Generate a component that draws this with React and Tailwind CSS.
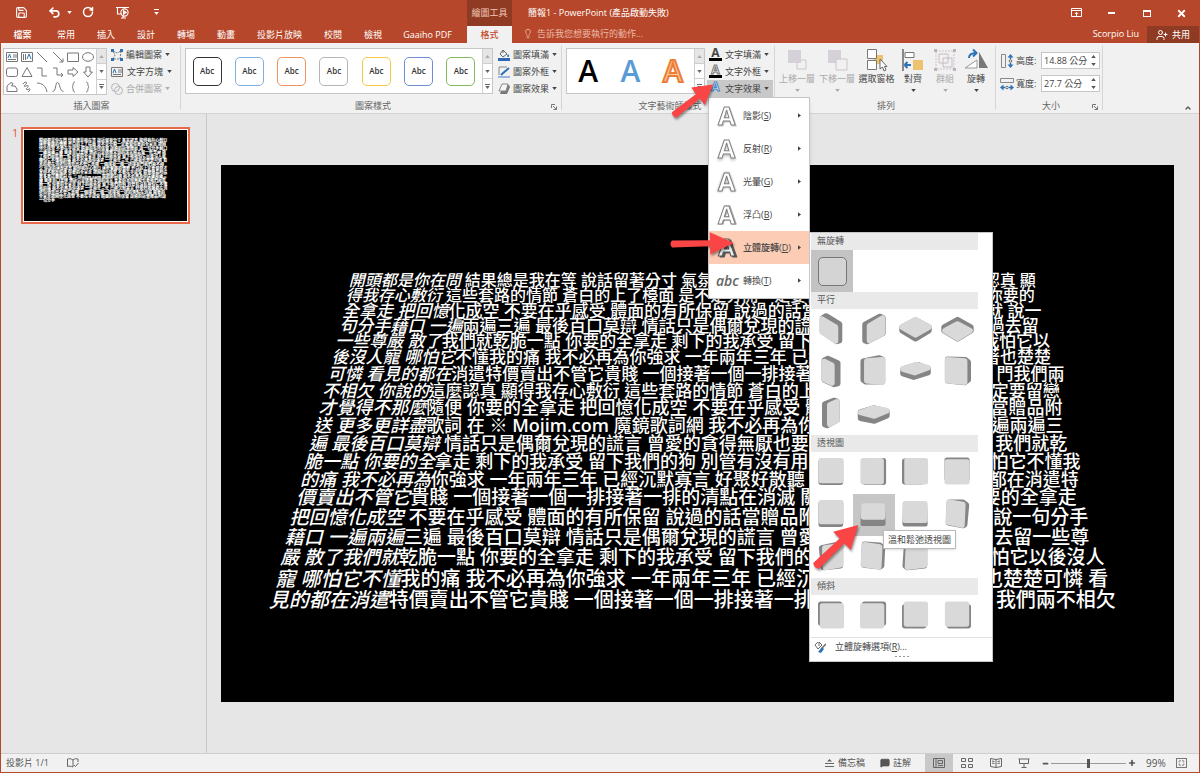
import clsx from "clsx";
import {
  ChevronUp,
  Lightbulb,
  Maximize,
  MessageSquare,
  Minus,
  Plus,
  RotateCw,
  Save,
  Undo2,
  UserPlus,
  X,
} from "lucide-react";

const TABS = ["常用", "插入", "設計", "轉場", "動畫", "投影片放映", "校閱", "檢視"];

// from / to are the line's edges in percent of the slide width
const LINES = [
  { size: "text-[16px] leading-[15px]", from: 13.4, to: 14.5, lean: "開頭都是你在問", text: " 結果總是我在等 說話留著分寸 氣氛", end: "認真 顯" },
  { size: "text-[16px] leading-[15px]", from: 13.1, to: 14.6, lean: "得我存心敷衍", text: " 這些套路的情節 蒼白的上了檯面 是不是分開一定要留", end: "你要的" },
  { size: "text-[17px] leading-[15px]", from: 12.7, to: 13.9, lean: "全拿走 把回憶", text: "化成空 不要在乎感受 體面的有所保留 說過的話當贈", end: "就 說一" },
  { size: "text-[17px] leading-[15px]", from: 12.4, to: 14.2, lean: "句分手藉口 一遍", text: "兩遍三遍 最後百口莫辯 情話只是偶爾兌現的謊言", end: "過去留" },
  { size: "text-[17px] leading-[16px]", from: 12, to: 13, lean: "一些尊嚴 散了", text: "我們就乾脆一點 你要的全拿走 剩下的我承受 留下我", end: "我怕它以" },
  { size: "text-[17px] leading-[16px]", from: 11.6, to: 12.9, lean: "後沒人寵 哪怕它", text: "不懂我的痛 我不必再為你強求 一年兩年三年 已經", end: "著也楚楚" },
  { size: "text-[17px] leading-[17px]", from: 11.2, to: 11.5, lean: "可憐 看見的都在", text: "消遣特價賣出不管它貴賤 一個接著一個一排接著", end: "門我們兩" },
  { size: "text-[17px] leading-[17px]", from: 10.6, to: 12, lean: "不相欠 你說的", text: "這麼認真 顯得我存心敷衍 這些套路的情節 蒼白的上", end: "定要留戀" },
  { size: "text-[18px] leading-[17px]", from: 10.2, to: 11.7, lean: "才覺得不那麼", text: "隨便 你要的全拿走 把回憶化成空 不要在乎感受 體", end: "當贈品附" },
  { size: "text-[18px] leading-[18px]", from: 9.7, to: 11.6, lean: "送 更多更詳盡", text: "歌詞 在 ※ ", brand: "Mojim.com", after: " 魔鏡歌詞網 我不必再為你送", end: "遍兩遍三" },
  { size: "text-[18px] leading-[18px]", from: 9.2, to: 11.2, lean: "遍 最後百口莫辯", text: " 情話只是偶爾兌現的謊言 曾愛的貪得無厭也要", end: "我們就乾" },
  { size: "text-[18px] leading-[18px]", from: 8.7, to: 9.8, lean: "脆一點 你要的全", text: "拿走 剩下的我承受 留下我們的狗 別管有沒有用", end: "怕它不懂我" },
  { size: "text-[18px] leading-[18px]", from: 8.3, to: 10, lean: "的痛 我不必再為", text: "你強求 一年兩年三年 已經沉默寡言 好聚好散聽", end: "都在消遣特" },
  { size: "text-[19px] leading-[19px]", from: 7.9, to: 10.2, lean: "價賣出不管它", text: "貴賤 一個接著一個一排接著一排的清點在消滅 關", end: "要的全拿走" },
  { size: "text-[19px] leading-[20px]", from: 7.2, to: 9, lean: "把回憶化成空", text: " 不要在乎感受 體面的有所保留 說過的話當贈品附", end: "說一句分手" },
  { size: "text-[19px] leading-[20px]", from: 6.7, to: 8.9, lean: "藉口 一遍兩遍", text: "三遍 最後百口莫辯 情話只是偶爾兌現的謊言 曾愛", end: "去留一些尊" },
  { size: "text-[19px] leading-[21px]", from: 6.2, to: 7.3, lean: "嚴 散了我們就", text: "乾脆一點 你要的全拿走 剩下的我承受 留下我們的", end: "怕它以後沒人" },
  { size: "text-[20px] leading-[21px]", from: 5.7, to: 6.9, lean: "寵 哪怕它不懂", text: "我的痛 我不必再為你強求 一年兩年三年 已經沉默", end: "也楚楚可憐 看" },
  { size: "text-[20px] leading-[22px]", from: 5, to: 6.1, lean: "見的都在消遣", text: "特價賣出不管它貴賤 一個接著一個一排接著一排", end: "我們兩不相欠" },
];

const STYLES = [
  "border-[#333333]",
  "border-[#7fb0e0]",
  "border-[#f0935c]",
  "border-[#b5b5b5]",
  "border-[#f7c843]",
  "border-[#6f8fd0]",
  "border-[#84bb5f]",
];

function Caret({ className }) {
  return (
    <svg viewBox="0 0 6 4" className={clsx("w-[5px] h-[3px] shrink-0", className)}>
      <path d="M0 0h6L3 4z" fill="currentColor" />
    </svg>
  );
}

/* ---------- Title bar ---------- */

function TitleBar() {
  return (
    <header className="flex bg-[#b7472a] text-white">
      <div className="w-[466px] shrink-0">
        <div className="h-[26px] flex items-center pl-[14px] pb-[2px]">
          <button aria-label="儲存" className="w-[14px]">
            <Save className="w-[13px] h-[13px]" />
          </button>
          <button aria-label="復原" className="ml-[19px] flex items-center gap-[6px]">
            <Undo2 className="w-[13px] h-[13px]" strokeWidth={3} />
            <Caret />
          </button>
          <button aria-label="取消復原" className="ml-[10px]">
            <RotateCw className="w-3 h-3" strokeWidth={3} />
          </button>
          <button aria-label="從首張投影片" className="ml-[22px]">
            <svg viewBox="0 0 14 13" className="w-[14px] h-[13px]" fill="none" stroke="currentColor" strokeWidth="1.1">
              <path d="M0 1.500h13M1.500 1.500v6.500h4M5 12h5M7 9.500V12" />
              <circle cx="8.500" cy="6.500" r="3.600" />
              <path d="M7.500 4.800v3.400l2.700-1.700z" fill="currentColor" />
            </svg>
          </button>
          <button aria-label="自訂快速存取工具列" className="ml-6 flex flex-col items-center gap-[2px]">
            <span className="w-[5px] h-px bg-white" />
            <Caret />
          </button>
        </div>
        <nav className="h-[17px] flex text-[9px] leading-[15px]">
          <button className="w-[43px] mr-[2px] text-center font-medium">檔案</button>
          {TABS.map((t) => (
            <button key={t} className="px-[11px] whitespace-nowrap">
              {t}
            </button>
          ))}
          <button className="pl-[10px] text-[9px] whitespace-nowrap">Gaaiho PDF</button>
        </nav>
      </div>

      <div className="w-[45px] shrink-0 text-center text-[9px] whitespace-nowrap">
        <div className="h-[26px] leading-[26px] bg-[#8f3b24] text-[#f0c4b4]">繪圖工具</div>
        <button className="block w-full h-[17px] leading-[15px] bg-[#f1f1f1] text-[#c04a2b] font-medium">
          格式
        </button>
      </div>

      <div className="flex-1 min-w-0">
        <div className="h-[26px] flex items-center justify-between pl-4 text-[9px]">
          <h1 className="whitespace-nowrap">簡報1 - PowerPoint (產品啟動失敗)</h1>
          <div className="flex">
            <button aria-label="功能區顯示選項" className="w-[35px] flex justify-center">
              <svg viewBox="0 0 11 9" className="w-[11px] h-[9px]" fill="none" stroke="currentColor">
                <path d="M.5.5h10v8H.5zM.5 2.500h10M5.500 8V4.500M3.800 6l1.700-1.700L7.200 6" />
              </svg>
            </button>
            <button aria-label="最小化" className="w-[35px] flex justify-center items-center">
              <span className="w-[7px] h-[2px] bg-white" />
            </button>
            <button aria-label="最大化" className="w-[35px] flex justify-center items-center">
              <span className="w-2 h-[7px] border border-t-2 border-white" />
            </button>
            <button aria-label="關閉" className="w-[35px] flex justify-center">
              <X className="w-[11px] h-[11px]" strokeWidth={4} />
            </button>
          </div>
        </div>
        <div className="h-[17px] flex text-[9px] leading-[15px]">
          <button className="flex pl-[11px] gap-1 text-[#ecb9a8] whitespace-nowrap">
            <Lightbulb className="w-[10px] h-[11px] mt-[2px]" />
            告訴我您想要執行的動作...
          </button>
          <span className="ml-auto mr-2">Scorpio Liu</span>
          <button className="w-[52px] flex items-center justify-center gap-1 bg-[#8f3b24]">
            <UserPlus className="w-3 h-3" strokeWidth={2} />
            共用
          </button>
        </div>
      </div>
    </header>
  );
}

/* ---------- Ribbon ---------- */

function Group({ label, launcher, className, children }) {
  return (
    <section className={clsx("relative flex flex-col border-r border-[#d5d5d5] my-[3px] shrink-0", className)}>
      <div className="flex-1 flex">{children}</div>
      <div className="h-[9px] text-center text-[9px] leading-[9px] text-[#666]">{label}</div>
      {launcher && (
        <svg viewBox="0 0 6 6" className="absolute right-1 bottom-0 w-[6px] h-[6px]" fill="none" stroke="#777">
          <path d="M.5 4V.5H4M2 2l3.500 3.500M5.500 2.500v3h-3" />
        </svg>
      )}
    </section>
  );
}

function Scroller() {
  return (
    <div className="w-[10px] flex flex-col border-l border-[#cfcfcf] text-[#666] divide-y divide-[#cfcfcf]">
      <button aria-label="上一列" className="flex-1 flex items-center justify-center bg-[#e6e6e6] text-[#aaa]">
        <Caret className="rotate-180" />
      </button>
      <button aria-label="下一列" className="flex-1 flex items-center justify-center">
        <Caret />
      </button>
      <button aria-label="其他" className="flex-1 flex flex-col items-center justify-center gap-px">
        <span className="w-[5px] h-px bg-[#666]" />
        <Caret />
      </button>
    </div>
  );
}

function SmallButton({ icon, label, disabled, active, gap = "gap-[3px]" }) {
  return (
    <button
      disabled={disabled}
      className={clsx(
        "h-[17px] flex items-center pl-[2px] pr-1 text-[9px] whitespace-nowrap",
        gap,
        disabled ? "text-[#aaa]" : "text-[#444]",
        active && "bg-[#c8c8c8]"
      )}
    >
      {icon}
      <span>{label}</span>
      <Caret />
    </button>
  );
}

const SHAPES = [
  <g key="0"><path d="M.5 1.500h11v9H.5z" /><path d="M7 4h4M7 6h4M2 8.500h8" /><path d="M2 7l1.500-4L5 7" stroke="#2b72b8" /></g>,
  <g key="1"><path d="M.5 1.500h11v9H.5zM2.500 3v6M4.500 3v6" /><path d="M6 8l2-5 2 5" stroke="#2b72b8" /></g>,
  <path key="2" d="M1 1l10 10" />,
  <path key="3" d="M1 1l10 10M11 7.500V11H7.500" />,
  <path key="4" d="M.5 2h11v8.500H.5z" />,
  <ellipse key="5" cx="6" cy="6" rx="5.500" ry="4.300" />,
  <rect key="6" x=".5" y="2" width="11" height="8.500" rx="2" />,
  <path key="7" d="M6 1.500l5 9H1z" />,
  <path key="8" d="M1 2h5v8h5" />,
  <path key="9" d="M1 2h4v7h6M9 7l2 2-2 2" />,
  <path key="10" d="M1 4h5V1.500L11 6l-5 4.500V8H1z" />,
  <path key="11" d="M4 1v5H1.500L6 11l4.500-5H8V1z" />,
  <path key="12" d="M1 10.500V5l4-3.500 2 1L5.500 5H9l2 3v2.500z" />,
  <path key="13" d="M2 3c2-3 5-2 3 0s-3 3 0 2 3 0 1 2 1 2 2 1 2 1-1 3" />,
  <path key="14" d="M1 2c5 0 9 3 10 9" />,
  <path key="15" d="M.5 10.500c4 0 2.500-9 5-9s2 9 6 9" />,
  <path key="16" d="M8 1C5 1 7 5 5 6c2 1 0 5 3 5" />,
  <path key="17" d="M4 1c3 0 1 4 3 5-2 1 0 5-3 5" />,
];

function TextBoxIcon() {
  return (
    <svg viewBox="0 0 12 12" className="w-3 h-3" fill="none" stroke="#777">
      {SHAPES[0]}
    </svg>
  );
}

function LetterIcon({ className, bar }) {
  return (
    <span
      className={clsx(
        "w-[13px] h-[13px] text-[12px] leading-[10px] text-center font-bold",
        bar && "border-b-3 border-black",
        className
      )}
    >
      A
    </span>
  );
}

function BigButton({ label, disabled, caret = true, className, children }) {
  return (
    <button
      disabled={disabled}
      className={clsx(
        "flex flex-col items-center text-[9px] leading-[14px] whitespace-nowrap",
        disabled ? "text-[#aaa]" : "text-[#444]",
        className
      )}
    >
      <svg viewBox="0 0 24 24" className="w-6 h-6 mt-[2px]" fill="none">
        {children}
      </svg>
      <span>{label}</span>
      {caret && <Caret className="mt-[3px]" />}
    </button>
  );
}

function SizeField({ id, label, value, vertical }) {
  return (
    <div className="flex items-center">
      <svg
        viewBox="0 0 14 14"
        className={clsx("w-[14px] h-[14px] mr-[2px] shrink-0", vertical && "rotate-90 -scale-y-100")}
        fill="none"
      >
        <path d="M.5 1.500h13v4H.5z" stroke="#888" />
        <path d="M0 10.500l3.500-3v6zM14 10.500l-3.500-3v6z" fill="#2b72b8" />
        <path d="M3 10.500h2M9 10.500h2" stroke="#2b72b8" strokeWidth="1.500" />
        <circle cx="7" cy="10.500" r="1.300" stroke="#666" />
      </svg>
      <label htmlFor={id} className="w-[25px] shrink-0 text-[9px] text-[#444] whitespace-nowrap">
        {label}
      </label>
      <div className="w-[59px] h-[17px] flex items-center bg-white border border-[#c6c6c6]">
        <input
          id={id}
          defaultValue={value}
          className="w-[49px] min-w-0 pl-[2px] text-[9px] text-[#444] outline-none"
        />
        <span className="flex flex-col gap-[5px] text-[#555]">
          <Caret className="rotate-180" />
          <Caret />
        </span>
      </div>
    </div>
  );
}

function Ribbon() {
  return (
    <div className="relative z-10 h-[71px] flex pl-[2px] bg-[#f1f1f1] border-b border-[#d2d2d2]">
      <Group label="插入圖案" className="w-[178px]">
        <div className="w-[104px] h-[47px] mt-[2px] flex bg-white border border-[#c6c6c6]">
          <div className="flex-1 grid grid-cols-6 place-items-center">
            {SHAPES.map((s, i) => (
              <svg key={i} viewBox="0 0 12 12" className="w-3 h-3" fill="none" stroke="#777">
                {s}
              </svg>
            ))}
          </div>
          <Scroller />
        </div>
        <div className="ml-[2px]">
          <SmallButton
            label="編輯圖案"
            icon={
              <svg viewBox="0 0 12 12" className="w-3 h-3" fill="none">
                <path d="M2 2l4 2 4-2-1 8-7 0 2-4z" stroke="#777" strokeDasharray="2 1" />
                <path d="M0 0h3v3H0zM9 0h3v3H9zM0 9h3v3H0zM9 9h3v3H9z" fill="#2b72b8" />
              </svg>
            }
          />
          <SmallButton label="文字方塊" gap="gap-1" icon={<TextBoxIcon />} />
          <SmallButton
            label="合併圖案"
            disabled
            icon={
              <svg viewBox="0 0 12 12" className="w-3 h-3" fill="none" stroke="#b5b5b5">
                <circle cx="4.500" cy="4.500" r="4" />
                <circle cx="7.500" cy="7.500" r="4" />
              </svg>
            }
          />
        </div>
      </Group>

      <Group label="圖案樣式" launcher className="w-[381px] pl-1">
        <div className="w-[308px] h-[46px] mt-[2px] flex bg-white border border-[#c6c6c6]">
          <div className="flex-1 flex items-center justify-around">
            {STYLES.map((s) => (
              <button
                key={s}
                className={clsx(
                  "w-[29px] h-[29px] rounded-[5px] border text-[8px] font-semibold text-[#333]",
                  s
                )}
              >
                Abc
              </button>
            ))}
          </div>
          <Scroller />
        </div>
        <div className="ml-[3px]">
          <SmallButton
            label="圖案填滿"
            icon={
              <svg viewBox="0 0 12 12" className="w-3 h-3" fill="none">
                <path d="M5 1l4 4-4 3-3-3zM5 1v3" stroke="#666" />
                <path d="M10 5c2 2 1 3 0 3s-1-2 0-3z" fill="#2b72b8" />
                <path d="M0 9h12v3H0z" fill="#2f66b5" />
              </svg>
            }
          />
          <SmallButton
            label="圖案外框"
            icon={
              <svg viewBox="0 0 12 12" className="w-3 h-3" fill="none">
                <path d="M9 1H1v8" stroke="#888" />
                <path d="M11 2L4 8l-1 1" stroke="#2b72b8" strokeWidth="2" />
                <path d="M0 10h12v2H0z" fill="#9bb9dc" />
              </svg>
            }
          />
          <SmallButton
            label="圖案效果"
            icon={
              <svg viewBox="0 0 12 12" className="w-3 h-3">
                <path d="M5 2h6l1 2-3 7H2z" fill="#777" />
                <path d="M4 1h6L8 8H1z" fill="#f5f5f5" stroke="#888" />
              </svg>
            }
          />
        </div>
      </Group>

      <Group label="文字藝術師樣式" className="w-[213px] pl-1">
        <div className="w-[139px] h-[46px] mt-[2px] flex bg-white border border-[#c6c6c6]">
          <div className="flex-1 flex items-center justify-around text-[30px] leading-[44px]">
            <button className="font-semibold text-black">A</button>
            <button className="font-semibold text-[#5b9bd5]">A</button>
            <button className="font-semibold text-[#f8cbad] [-webkit-text-stroke:2px_#ed7d31]">A</button>
          </div>
          <Scroller />
        </div>
        <div className="relative ml-[2px]">
          <SmallButton label="文字填滿" icon={<LetterIcon bar className="text-[#444]" />} />
          <SmallButton
            label="文字外框"
            icon={<LetterIcon bar className="text-white [-webkit-text-stroke:1px_#777]" />}
          />
          <SmallButton
            active
            label="文字效果"
            icon={<LetterIcon className="text-white [-webkit-text-stroke:1px_#4a86c8]" />}
          />
          <EffectsMenu />
        </div>
      </Group>

      <Group label="排列" className="w-[221px] pl-[2px]">
        <BigButton label="上移一層" disabled className="w-10">
          <path d="M12 12h9v9h-9z" stroke="#ccc4cc" />
          <path d="M3 2h13v13H3z" fill="#d6d0d8" />
        </BigButton>
        <BigButton label="下移一層" disabled className="w-10">
          <path d="M3 2h13v13H3z" fill="#d6d0d8" />
          <path d="M11 11h11v11H11z" fill="#f1f1f1" stroke="#ccc4cc" />
        </BigButton>
        <BigButton label="選取窗格" caret={false} className="w-[39px]">
          <path d="M9 7h9v9H9z" fill="#eec36f" />
          <path d="M2.500 1.500h9v9h-9zM2.500 12.500h9v9h-9z" fill="#fff" stroke="#777" />
          <path d="M15 11v10l2.500-2 1.500 4 2-1-1.500-3.500H22z" fill="#fff" stroke="#666" />
        </BigButton>
        <BigButton label="對齊" className="w-[34px]">
          <path d="M2 1v22" stroke="#666" strokeWidth="1.500" />
          <path d="M4 4.500h9v5H4z" stroke="#777" fill="#fff" />
          <path d="M12 12h10v10H12z" fill="#eec36f" />
          <path d="M3.500 17l3-3M3.500 17l3 3M3.500 17H10" stroke="#2b72b8" strokeWidth="2" />
        </BigButton>
        <BigButton label="群組" disabled className="w-[30px]">
          <path d="M3 3h18v18H3z" stroke="#ccc4cc" strokeDasharray="2 1" />
          <path d="M6 6h9v9H6zM10 10h9v9h-9z" stroke="#c4bcc4" />
          <path d="M1 1h3v3H1zM20 1h3v3h-3zM1 20h3v3H1zM20 20h3v3h-3z" fill="#bbb3bb" />
        </BigButton>
        <BigButton label="旋轉" className="w-8">
          <path d="M15 4v16h9z" fill="#777" />
          <path d="M13 12v8H1z" fill="#fff" stroke="#999" />
          <path d="M5 10c0-4 3-5 7-5M9 1.500L12.500 5 9 8.500" stroke="#2b72b8" strokeWidth="2" />
        </BigButton>
      </Group>

      <Group label="大小" launcher className="w-[107px] pl-1">
        <div className="mt-[6px] flex flex-col gap-[6px]">
          <SizeField id="shape-height" label="高度:" value="14.88 公分" vertical />
          <SizeField id="shape-width" label="寬度:" value="27.7 公分" />
        </div>
      </Group>

      <button aria-label="摺疊功能區" className="ml-auto mr-[7px] mb-[1px] self-end">
        <ChevronUp className="w-2 h-2 text-[#555]" strokeWidth={4} />
      </button>
    </div>
  );
}

/* ---------- Text effects menu ---------- */

const EFFECTS = [
  { label: "陰影", hot: "S", icon: "drop-shadow-[1px_1px_0_#ccc]" },
  { label: "反射", hot: "R", icon: "drop-shadow-[0_2px_1px_#ccc]" },
  { label: "光暈", hot: "G", icon: "drop-shadow-[0_0_1px_#aaa]" },
  { label: "浮凸", hot: "B", icon: "drop-shadow-[1px_0_0_#aaa]" },
];

function MenuItem({ label, hot, icon, active, children }) {
  return (
    <li className={clsx("relative", active && "bg-[#fcccb5]")}>
      <button className="w-full h-[33px] flex items-center px-[7px]">
        <span className="w-[21px] mr-[6px] text-center">{icon}</span>
        <span className={clsx("whitespace-nowrap", active && "font-medium")}>
          {label}(<u>{hot}</u>)
        </span>
        <Caret className="ml-auto -rotate-90" />
      </button>
      {children}
    </li>
  );
}

function EffectsMenu() {
  return (
    <ul className="absolute left-px top-[51px] w-[102px] py-px bg-white border border-[#c6c6c6] shadow-md text-[9px] text-[#444]">
      {EFFECTS.map((e) => (
        <MenuItem
          key={e.hot}
          label={e.label}
          hot={e.hot}
          icon={
            <span
              className={clsx(
                "inline-block text-[25px] leading-6 font-bold text-white [-webkit-text-stroke:1px_#808080]",
                e.icon
              )}
            >
              A
            </span>
          }
        />
      ))}
      <MenuItem
        label="立體旋轉"
        hot="D"
        active
        icon={
          <span className="inline-block text-[24px] leading-6 font-bold text-[#eee] [-webkit-text-stroke:1px_#555] drop-shadow-[2px_1px_0_#555]">
            A
          </span>
        }
      >
        <RotationMenu />
      </MenuItem>
      <MenuItem
        label="轉換"
        hot="T"
        icon={<span className="text-[14px] leading-5 italic font-semibold text-[#666]">abc</span>}
      />
    </ul>
  );
}

// back is the extruded body, face the lit front side
const PARALLEL = [
  { back: "11,9 15,6.500 30,15.500 30,34 27,35 11,24", face: "10.500,10 25.500,19 25.500,34.500 10.500,24.500" },
  { back: "11.500,16 28,7 31.500,8.500 31.500,26 14,35 11.500,34", face: "16.500,17.500 31,9 31,26 16.500,34" },
  { back: "6,19 21,11 36,19 36,23 21,32 6,23", face: "6,19 21,10.500 36,19 21,27.500" },
  { back: "6,19 21,10.500 36,19 36,23 21,32 6,23", face: "7,23 21,15.500 35,23 21,31.500" },
  { back: "13,9 17,7 28,12 28,35 24,36 13,31", face: "13,10.500 21.500,14.500 21.500,34.500 13,30.500" },
  { back: "9.500,10 27,6.500 31,8 31,33 12,33 9.500,31", face: "13.500,10 31,8.500 31,33.500 13.500,32" },
  { back: "7,19 23,14 35,18 35,23 19,28 7,24", face: "7,19 22,14 35,17.500 20,23" },
  { back: "10,8 30,8.500 33,11 33,31 29,34 10,32", face: "10,8.500 29,10 29,33.500 10,32" },
  { back: "13.500,11 24,7 27,8 27,29 16,35 13.500,34", face: "19,12 27,8.500 27,29 19,33.500" },
  { back: "6.500,20 21,15.500 36,19 36,24 22,30 6.500,27", face: "6.500,20.500 21,15.500 36,18.500 22,24.500" },
];

const PERSPECTIVE = [
  { back: "9.500,10 31,10 31,32.500 9.500,32.500", face: "9.500,8.500 31.500,8.500 31.500,30.500 9.500,30.500" },
  { back: "12,8.500 32,8.500 32,32.500 12,32.500", face: "9.500,8.500 29.500,8.500 29.500,32 9.500,32" },
  { back: "9,9 28,9 28,32 9,32", face: "11.500,8.500 32,8.500 32,32 11.500,32" },
  { back: "9.500,8 31.500,8 31.500,28 9.500,28", face: "9.500,10 31.500,10 31.500,32 9.500,32" },
  { back: "9.500,10 31,10 31,32.500 9.500,32.500", face: "9.500,8.500 31.500,8.500 31.500,29.500 9.500,29.500" },
  { back: "10,20 31,20 31.500,31.500 9.500,31.500", face: "10.500,12 30.500,12 31,24.500 10,24.500", active: true },
  { back: "10,12 31,12 31.500,32 9.500,32", face: "9.500,9.500 31.500,9.500 31.500,28 9.500,28" },
  { back: "12,8 27,8 31,11 29,33 27,34 11,31", face: "12,8 27,10.500 26,33.500 10.500,30" },
  { back: "10,12 29,8 31,10 31,32 12,34", face: "13.500,12 31,9.500 31,31 14,34" },
  { back: "11,8 28,9 31,12 30,32 28,33 10,31", face: "11,8.500 28,11 27,33 9.500,30.500" },
  { back: "11,10 31,10 31,32 12,34 9.500,32", face: "13,11 31.500,10 31.500,31 12,33.500" },
];

const OBLIQUE = [
  { back: "9,9 30,9 30,30 9,30", face: "11,11 32,11 32,33 11,33" },
  { back: "11,9 32,9 32,30 11,30", face: "9,11 30,11 30,33 9,33" },
  { back: "9,12 30,12 30,33 9,33", face: "11,9 32,9 32,31 11,31" },
  { back: "12,12 33,12 33,33 12,33", face: "10,9 31,9 31,31 10,31" },
];

function PresetRow({ items, name }) {
  return (
    <div className="grid grid-cols-4 w-[168px]">
      {items.map((p, i) => (
        <button key={i} aria-label={`${name} ${i + 1}`} className={clsx("w-[42px] h-[42px]", p.active && "bg-[#c6c6c6]")}>
          <svg viewBox="0 0 42 42" className="w-[42px] h-[42px]" strokeWidth="6" strokeLinejoin="round">
            <g transform="translate(20.500 19.500) scale(.9) translate(-21 -20.500)">
              <polygon points={p.back} fill="#858585" stroke="#858585" />
              <polygon points={p.face} fill="#d9d9d9" stroke="#d9d9d9" />
            </g>
          </svg>
        </button>
      ))}
    </div>
  );
}

function PresetHeading({ children }) {
  return <h3 className="h-[17px] mr-[14px] pl-[6px] bg-[#e9e9e9] leading-4 text-[#555]">{children}</h3>;
}

function RotationMenu() {
  return (
    <div className="absolute left-full top-px w-[184px] pl-px bg-white border border-[#c6c6c6]">
      <PresetHeading>無旋轉</PresetHeading>
      <button aria-label="無旋轉" className="w-[42px] h-[42px] flex items-center justify-center bg-[#c3c3c3]">
        <span className="w-[29px] h-[29px] rounded-[5px] border border-[#777] bg-[#d4d4d4]" />
      </button>
      <PresetHeading>平行</PresetHeading>
      <PresetRow name="平行" items={PARALLEL} />
      <PresetHeading>透視圖</PresetHeading>
      <div className="relative">
        <PresetRow name="透視圖" items={PERSPECTIVE} />
        <div
          role="tooltip"
          className="absolute left-[72px] top-[78px] px-1 h-[19px] leading-[17px] bg-white border border-[#bbb] shadow whitespace-nowrap"
        >
          溫和鬆弛透視圖
        </div>
      </div>
      <PresetHeading>傾斜</PresetHeading>
      <PresetRow name="傾斜" items={OBLIQUE} />
      <button className="w-full h-[19px] flex items-center gap-[9px] pl-[3px] border-t border-[#e0e0e0]">
        <svg viewBox="0 0 12 12" className="w-3 h-3" fill="none">
          <path d="M4 1L1 4l3 4 4-4-3-3v4" stroke="#666" />
          <path d="M12 3L8 7" stroke="#666" strokeWidth="1.500" />
          <path d="M8 6l2 2-3 4-3-1z" fill="#2b72b8" />
        </svg>
        <span>
          立體旋轉選項(<u>R</u>)...
        </span>
      </button>
      <div className="h-[5px] flex justify-center gap-[2px]">
        {[0, 1, 2, 3].map((i) => (
          <span key={i} className="w-[2px] h-px bg-[#999]" />
        ))}
      </div>
    </div>
  );
}

/* ---------- Work area ---------- */

function Thumbnails() {
  return (
    <aside className="w-[206px] shrink-0 border-r border-[#c8c8c8] pt-[13px] pl-[11px] flex items-start gap-1">
      <span className="w-1 mr-px text-[11px] leading-3 text-[#d9593a]">1</span>
      <button aria-label="投影片 1" className="w-[169px] h-[97px] p-px bg-white border-2 border-[#e8694a]">
        <span className="h-full bg-black flex items-start pl-[15px] pt-[9px] text-white">
          <span className="w-[129px] text-left text-[4px] leading-[4px] font-black break-all">
            {LINES.slice(0, 15).map((l) => l.lean + l.text + (l.brand ?? "") + (l.after ?? "") + l.end).join("")}
          </span>
        </span>
      </button>
    </aside>
  );
}

function Slide() {
  return (
    <section className="flex-1 min-w-0 flex items-center pl-[14px] pr-[25px]">
      <div className="w-full aspect-video bg-black flex flex-col justify-center pt-4 text-white font-medium">
        {LINES.map((l, i) => (
          <p
            key={i}
            className={clsx("flex justify-between whitespace-pre", l.size)}
            style={{ paddingLeft: `${l.from}%`, paddingRight: `${l.to}%` }}
          >
            <span>
              <em>{l.lean}</em>
              {l.text}
              {l.brand && <b className="font-semibold">{l.brand}</b>}
              {l.after}
            </span>
            <span>{l.end}</span>
          </p>
        ))}
      </div>
    </section>
  );
}

function StatusBar() {
  return (
    <footer className="h-[19px] flex items-center pl-[5px] pr-3 bg-[#f1f1f1] border-t border-[#cfcfcf] text-[9px] text-[#555]">
      <span>投影片 1/1</span>
      <button aria-label="拼字檢查" className="ml-[18px]">
        <svg viewBox="0 0 12 10" className="w-3 h-[10px]" fill="none" stroke="#666">
          <path d="M6 2v7M6 2C4 .5 2 .5.5 1v7.500C2 8 4 8 6 9M6 2c1.500-1.500 3.500-1.500 5-1v3M7 7l1.500 1.500L11.500 5" />
        </svg>
      </button>
      <div className="ml-auto flex items-center self-stretch">
        <button className="flex items-center gap-1 mr-[15px]">
          <svg viewBox="0 0 9 8" className="w-[9px] h-2" fill="none" stroke="#666">
            <path d="M4.500 0L7 2.500H2z" fill="#666" stroke="none" />
            <path d="M0 4.500h9M0 7.500h9" />
          </svg>
          備忘稿
        </button>
        <button className="flex items-center gap-[3px] mr-[14px]">
          <MessageSquare className="w-[10px] h-[10px]" fill="currentColor" />
          註解
        </button>
        <button aria-label="標準模式" className="w-7 self-stretch flex items-center justify-center bg-[#c8c8c8]">
          <svg viewBox="0 0 12 10" className="w-3 h-[10px]" fill="none" stroke="#666">
            <path d="M.5.5h11v9H.5zM3 .5v9M5 2.500h4.500v3H5zM5 7.500h5" />
          </svg>
        </button>
        <button aria-label="投影片瀏覽" className="w-7 flex justify-center">
          <svg viewBox="0 0 12 10" className="w-3 h-[10px]" fill="none" stroke="#666">
            <path d="M.5.5h4v3h-4zM7.500.5h4v3h-4zM.5 6.500h4v3h-4zM7.500 6.500h4v3h-4z" />
          </svg>
        </button>
        <button aria-label="閱讀檢視" className="w-[29px] flex justify-center">
          <svg viewBox="0 0 12 10" className="w-3 h-[10px]" fill="none" stroke="#666">
            <path d="M6 1.500v8M6 1.500L.5.5v8L6 9.500l5.500-1v-8zM2 3l2.500.5M2 5l2.500.5M10 3l-2.500.5M10 5l-2.500.5" />
          </svg>
        </button>
        <button aria-label="投影片放映" className="w-7 flex justify-center">
          <svg viewBox="0 0 12 10" className="w-3 h-[10px]" fill="none" stroke="#666">
            <path d="M.5 1h11M1.500 1v4.500h9V1M6 5.500V9M3.500 9.500h5" />
          </svg>
        </button>
        <button aria-label="縮小" className="ml-1">
          <Minus className="w-[7px] h-[7px]" strokeWidth={6} />
        </button>
        <input
          type="range"
          aria-label="縮放"
          min="10"
          max="190"
          defaultValue="99"
          className="w-[75px] h-px mx-[2px] appearance-none bg-[#999] [&::-webkit-slider-thumb]:appearance-none [&::-webkit-slider-thumb]:w-[3px] [&::-webkit-slider-thumb]:h-[9px] [&::-webkit-slider-thumb]:bg-[#555]"
        />
        <button aria-label="放大">
          <Plus className="w-2 h-2" strokeWidth={5} />
        </button>
        <span className="w-[20px] ml-[10px] mr-[10px] text-[10px]">99%</span>
        <button aria-label="調整至視窗大小" className="border border-[#777] p-px">
          <Maximize className="w-[7px] h-[6px]" strokeWidth={3} />
        </button>
      </div>
    </footer>
  );
}

function Pointers() {
  const arrow = "M0 -3.500Q-3 0 0 3.500L38 3L38 11L62 0L38 -11L38 -3Z";
  return (
    <svg
      viewBox="0 0 1200 773"
      className="pointer-events-none absolute left-0 top-0 z-20 w-[1200px] h-[773px] drop-shadow-[1px_2px_1px_rgba(0,0,0,0.4)]"
      fill="#f94545"
    >
      <path d={arrow} transform="translate(673 115) rotate(-38) scale(.8 1)" />
      <path d={arrow} transform="translate(671 244) rotate(-1)" />
      <path d={arrow} transform="translate(815 566) rotate(-44) scale(.95 1.150)" />
    </svg>
  );
}

export default function App() {
  return (
    <div className="relative min-h-screen flex flex-col bg-[#e6e6e6] border border-t-0 border-[#b7472a] font-['Open_Sans','Noto_Sans_CJK_TC',sans-serif]">
      <TitleBar />
      <Ribbon />
      <main className="flex-1 flex">
        <Thumbnails />
        <Slide />
      </main>
      <StatusBar />
      <Pointers />
    </div>
  );
}
